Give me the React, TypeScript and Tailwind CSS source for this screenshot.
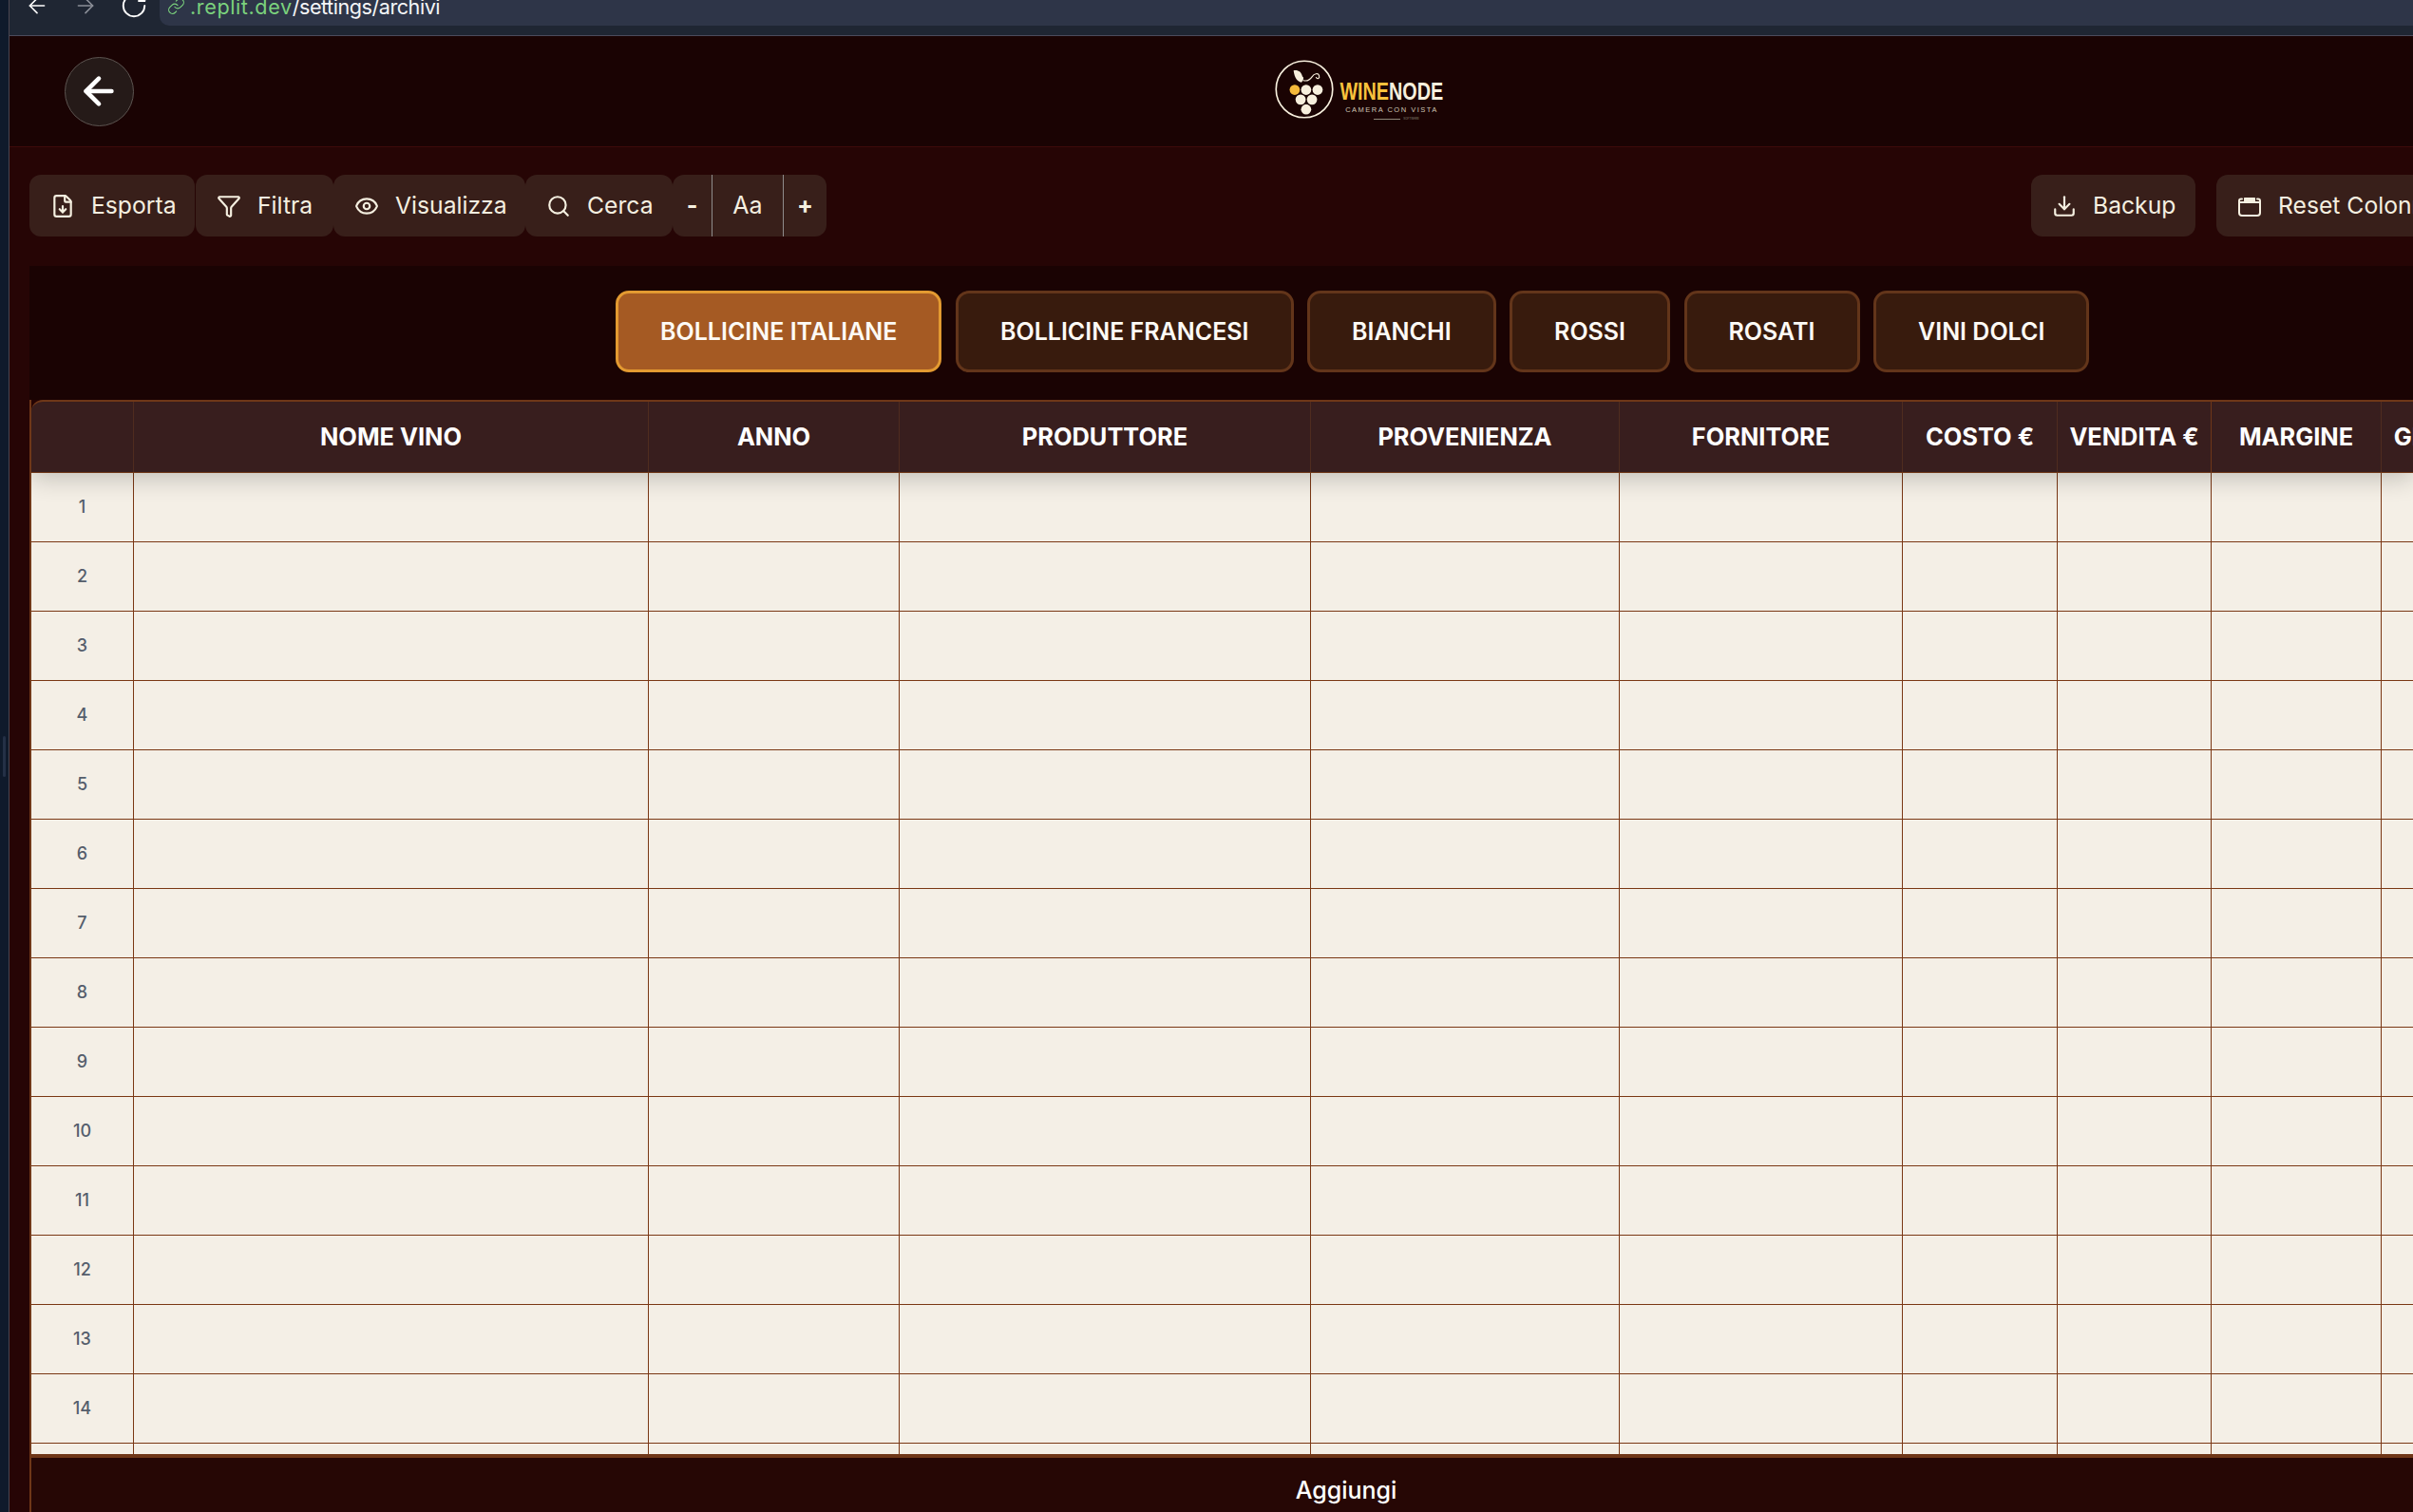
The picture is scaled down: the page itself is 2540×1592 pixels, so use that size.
import React from "react";
import { ArrowLeft, ArrowRight, RotateCw, Link, FileDown, Funnel, Eye, Search, Download } from "lucide-react";

const font = { fontFamily: "Inter, 'Liberation Sans', sans-serif" };

function ToolButton({ icon, label, className = "" }: { icon: React.ReactNode; label: string; className?: string }) {
  return (
    <button className={`flex h-[65px] shrink-0 items-center gap-[17px] rounded-[12px] bg-[#381f1a] px-[22px] text-[24.7px] leading-none text-[#f5efe0] ${className}`}>
      {icon}
      <span>{label}</span>
    </button>
  );
}

function ResetIcon() {
  return (
    <svg width="26" height="26" viewBox="0 0 26 26" fill="none" stroke="#f5efe0" strokeWidth="2" strokeLinejoin="round" strokeLinecap="round" className="shrink-0">
      <path d="M5 5.5 H4 Q2 5.5 2 7.5 V20 Q2 23 5 23 H21 Q24 23 24 20 V7.5 Q24 5.5 22 5.5 H21" />
      <rect x="7" y="4" width="12" height="4" rx="0.5" fill="#f5efe0" stroke="none" />
      <path d="M2 9 H24" />
    </svg>
  );
}

function Logo() {
  return (
    <div className="ml-[1201px] mt-[25px] flex items-start gap-[6px] self-start">
      <svg width="62" height="62" viewBox="0 0 60 60" fill="none" className="shrink-0">
        <circle cx="30" cy="30" r="28.8" stroke="#f7efdd" strokeWidth="1.6" />
        <path d="M19 11 C23 10 27 12 28 17 C30 18 29 21 27 23 C23 22 20 19 19 11 Z" fill="#f7efdd" />
        <path d="M29 21 C33 22 36 20 38 17 C40 14 44 13 45 16 C46 19 43 20 42 18" stroke="#f7efdd" strokeWidth="1.1" strokeLinecap="round" />
        <circle cx="20.2" cy="30.5" r="5.2" fill="#f5b93a" />
        <circle cx="31.8" cy="30.5" r="5.2" fill="#f7efdd" />
        <circle cx="43.5" cy="30.5" r="5.2" fill="#f7efdd" />
        <circle cx="26.2" cy="40.5" r="5.2" fill="#f7efdd" />
        <circle cx="37.8" cy="40.5" r="5.2" fill="#f7efdd" />
        <circle cx="31.8" cy="50.5" r="5.2" fill="#f7efdd" />
      </svg>
      <div className="mt-[22px] flex w-[110px] flex-col items-center">
        <div className="flex h-[22px] w-[110px] items-center justify-center overflow-visible">
          <span className="inline-block scale-x-[0.79] whitespace-nowrap text-[25px] font-bold leading-none" style={{ fontFamily: "'Liberation Sans', sans-serif" }}>
            <span className="text-[#f8c23c]">WINE</span>
            <span className="text-[#f7efdd]">NODE</span>
          </span>
        </div>
        <span className="mt-[4px] whitespace-nowrap text-[7.5px] leading-[9px] tracking-[1.5px] text-[#cfc6b5]" style={{ fontFamily: "'Liberation Sans', sans-serif" }}>CAMERA CON VISTA</span>
        <div className="mt-[3px] flex items-center gap-[3px] pl-[10px]">
          <div className="h-px w-[28px] bg-[#8f8678]" />
          <span className="text-[3px] leading-[4px] text-[#8f8678]">SOFTWARE</span>
        </div>
      </div>
    </div>
  );
}

const columns = ["", "NOME VINO", "ANNO", "PRODUTTORE", "PROVENIENZA", "FORNITORE", "COSTO €", "VENDITA €", "MARGINE", "GIACENZA"];
const gridCols = "grid grid-cols-[108px_542px_264px_433px_325px_298px_163px_162px_179px_160px]";
const tabs = ["BOLLICINE ITALIANE", "BOLLICINE FRANCESI", "BIANCHI", "ROSSI", "ROSATI", "VINI DOLCI"];

export default function App() {
  const rows = Array.from({ length: 15 }, (_, i) => i + 1);
  return (
    <div className="flex h-[1592px] w-[2540px] overflow-hidden bg-[#260505]" style={font}>
      <div className="flex h-full w-[10px] shrink-0 items-center border-r border-[#4a4650] bg-[#0f1a2b] pl-[3px]">
        <div className="h-[43px] w-[3px] rounded-full bg-[#243046]" />
      </div>
      <div className="flex min-w-0 flex-1 flex-col">
        <div className="flex h-[38px] shrink-0 items-start overflow-hidden border-b border-[#4b4b5c] bg-[#1f2633]">
          <div className="-mt-[9px] flex items-center pl-[16px] text-white">
            <ArrowLeft size={26} strokeWidth={1.5} className="shrink-0" />
            <ArrowRight size={26} strokeWidth={1.5} className="ml-[25px] shrink-0 text-[#8b8f98]" />
            <RotateCw size={30} strokeWidth={1.5} className="ml-[23px] shrink-0" />
          </div>
          <div className="ml-[12px] flex h-[27px] flex-1 items-end overflow-hidden rounded-bl-[10px] bg-[#2e3548] pl-[8px]">
            <Link size={19} strokeWidth={1.4} className="mb-[11px] shrink-0 text-[#7bd27d]" />
            <span className="mb-[7px] ml-[5px] whitespace-nowrap text-[21.6px] leading-[26px]">
              <span className="tracking-[0.6px] text-[#7bd27d]">.replit.dev</span>
              <span className="tracking-[-0.47px] text-[#f4f5f7]">/settings/archivi</span>
            </span>
          </div>
        </div>

        <div className="flex h-[117px] shrink-0 items-center border-b border-[#3d0a0a] bg-[#1a0303] pl-[58px]">
          <button className="flex h-[73px] w-[73px] shrink-0 items-center justify-center rounded-full border border-[#5c5450] bg-[#251a18] text-white">
            <ArrowLeft size={46} strokeWidth={2.4} className="-ml-[2px]" />
          </button>
          <Logo />
        </div>

        <div className="flex h-[125px] shrink-0 items-start bg-[#260505] pl-[21px] pt-[29px]">
          <ToolButton label="Esporta" className="w-[174px]" icon={<FileDown size={26} strokeWidth={2} className="shrink-0" />} />
          <ToolButton label="Filtra" className="ml-px w-[145px]" icon={<Funnel size={26} strokeWidth={2} className="shrink-0" />} />
          <ToolButton label="Visualizza" className="w-[202px]" icon={<Eye size={26} strokeWidth={2} className="shrink-0" />} />
          <ToolButton label="Cerca" className="w-[155px]" icon={<Search size={26} strokeWidth={2} className="shrink-0" />} />
          <div className="flex h-[65px] shrink-0 items-center rounded-[12px] bg-[#381f1a] text-[#f5efe0]">
            <div className="flex h-full w-[42px] items-center justify-center border-r border-[#8f8c8c] text-[25px] font-bold">-</div>
            <div className="flex h-full w-[75px] items-center justify-center border-r border-[#8f8c8c] text-[25px]">Aa</div>
            <div className="flex h-full w-[45px] items-center justify-center text-[25px] font-bold">+</div>
          </div>
          <ToolButton label="Backup" className="ml-[1268px] w-[173px]" icon={<Download size={26} strokeWidth={2} className="shrink-0" />} />
          <ToolButton label="Reset Colonne" className="ml-[22px]" icon={<ResetIcon />} />
        </div>

        <div className="flex min-h-0 flex-1 flex-col pl-[21px]">
          <div className="flex h-[141px] shrink-0 items-start gap-[14.5px] bg-[#1a0303] pl-[617px] pt-[26px]">
            {tabs.map((t, i) => (
              <button
                key={t}
                className={`flex h-[86px] shrink-0 items-center whitespace-nowrap rounded-[14px] border-[3px] px-[44px] text-[25px] font-semibold leading-none text-[#fdfaf5] ${
                  i === 0 ? "border-[#e39a31] bg-[#a55a23]" : "border-[#63351a] bg-[#381b0d]"
                }`}
              >
                {t}
              </button>
            ))}
          </div>

          <div className="flex min-h-0 flex-1 flex-col overflow-hidden border-l-2 border-[#6f3718]">
            <div className="relative z-10 shrink-0 rounded-tl-[12px] border-b border-t-2 border-[#6f3718] bg-[#381e1e] shadow-[0_6px_26px_rgba(0,0,0,0.2)]">
              <div className={`${gridCols} h-[74px]`}>
                {columns.map((c, i) => (
                  <div
                    key={i}
                    className={`flex items-center justify-center whitespace-nowrap border-r text-[25.4px] font-bold leading-none text-white ${
                      i === 7 ? "border-[#6f3718]" : "border-[#4f2c1f]"
                    }`}
                  >
                    {c}
                  </div>
                ))}
              </div>
            </div>
            <div className="h-[1033px] shrink-0 overflow-hidden bg-[#f4efe6]">
              {rows.map((r) => (
                <div key={r} className={`${gridCols} h-[73px] border-b border-[#7a3714]`}>
                  {columns.map((_, i) => (
                    <div key={i} className="flex items-center justify-center border-r border-[#7a3714] text-[18px] font-medium leading-none text-[#555e6c]">
                      {i === 0 ? (r <= 14 ? r : "") : ""}
                    </div>
                  ))}
                </div>
              ))}
            </div>
            <div className="flex w-[2768px] flex-1 items-center justify-center border-t-4 border-[#6f3718] bg-[#260705] pt-[11px] text-[25px] font-medium leading-none text-white">
              Aggiungi
            </div>
          </div>
        </div>
      </div>
    </div>
  );
}
